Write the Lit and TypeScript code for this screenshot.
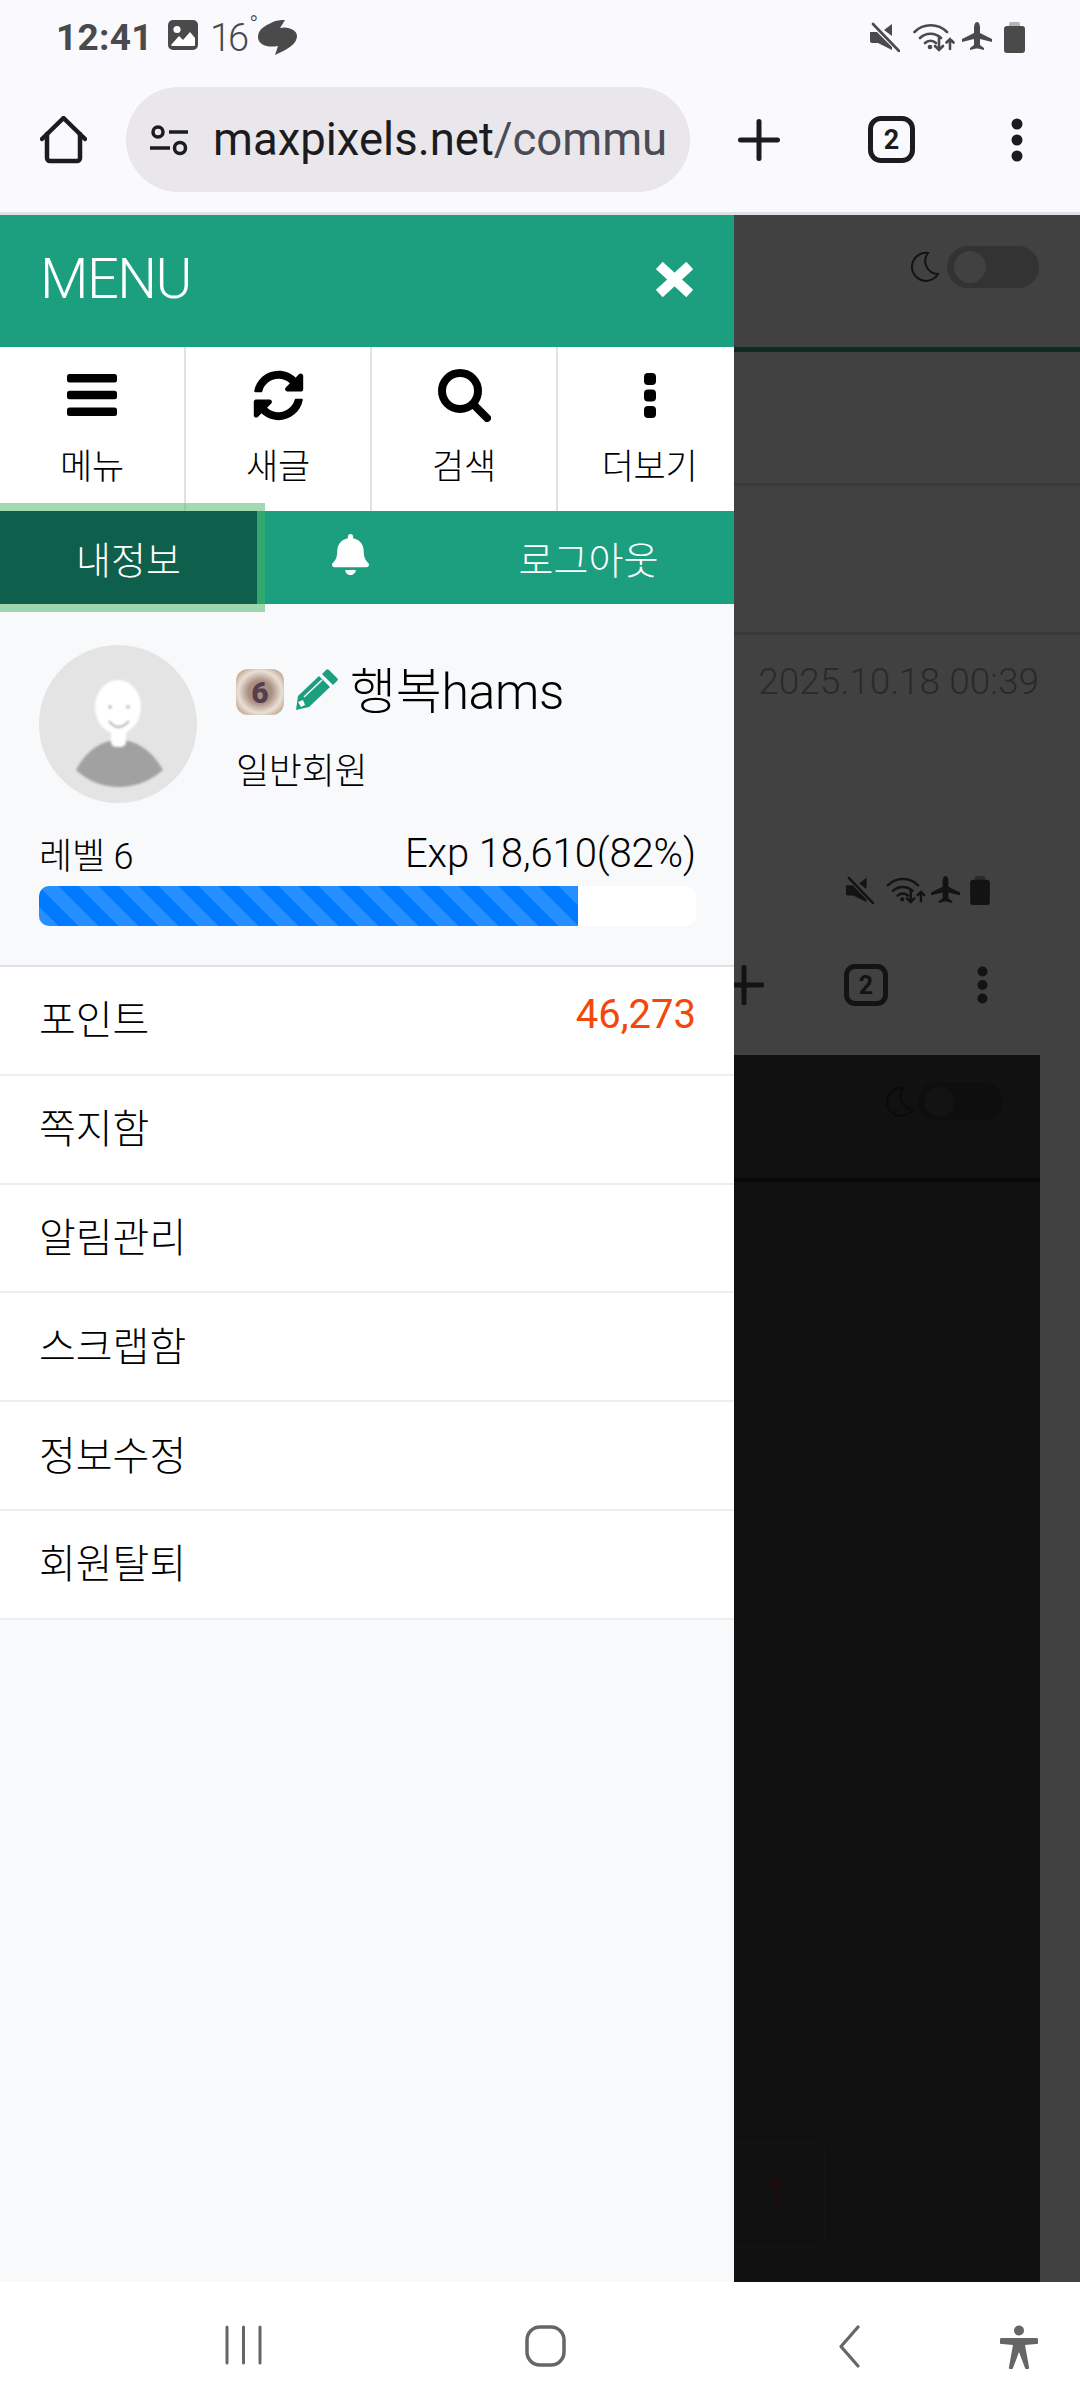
import { LitElement, html, css, svg } from "lit";
import { customElement } from "lit/decorators.js";

const moon = svg`<path d="M20 2 A14 14 0 1 0 30 23 A13 13 0 0 1 20 2Z" fill="none" stroke="currentColor" stroke-width="2"/>`;
const muteP = svg`<path d="M22 2V14L14 8Z M0 10H7L22 25V28L8 21H2a2 2 0 0 1-2-2Z" fill="currentColor"/><path d="M3 2L29 29" stroke="currentColor" stroke-width="2.6" stroke-linecap="round"/>`;
const wifiP = svg`<g fill="none" stroke="currentColor" stroke-width="2.6" stroke-linecap="round"><path d="M1.5 10A23 23 0 0 1 34 10"/><path d="M7 16A15 15 0 0 1 28 16"/><path d="M12 21A8 8 0 0 1 23 21"/><path d="M26 16V28M22 24L26 28L30 24"/><path d="M37 27V17M33.500 20.500L37 17L40.500 20.500"/></g><circle cx="17" cy="25" r="2.300" fill="currentColor"/>`;
const planeP = svg`<path d="M15 0c2 0 3 3 3 6v5l12 6v3l-12-3v6l4 3v2l-6-1.500h-2l-6 1.500v-2l4-3v-6l-12 3v-3l12-6v-5c0-3 1-6 3-6z" fill="currentColor"/>`;

@customElement("app-root")
export class AppRoot extends LitElement {
  static styles = css`
    :host {
      display: flex;
      flex-direction: column;
      width: 1080px;
      height: 2408px;
      overflow: hidden;
      font-family: Roboto, "Noto Sans CJK KR", sans-serif;
      color: #000;
      background: #fff;
    }
    svg { display: block; flex: none; }

    .chrome { height: 212px; background: #f9f9fe; border-bottom: 3px solid #dfe3e6; flex: none; }
    .status { height: 87px; display: flex; align-items: flex-start; padding: 20px 0 0 56px; box-sizing: border-box; color: #4a4a4a; }
    .time { font-size: 37px; line-height: 36px; font-weight: 700; width: 112px; letter-spacing: 0.3px; }
    .temp { display: flex; align-items: flex-start; font-size: 38px; font-weight: 300; line-height: 36px; margin: 0 0 0 12px; letter-spacing: -3px; width: 48px; }
    .deg { font-size: 24px; line-height: 24px; letter-spacing: 0; margin: -7px 0 0 3px; }
    .status-right { margin-left: auto; display: flex; padding-right: 55px; align-items: flex-start; padding-top: 2px; }
    .gap-13 { margin-left: 13px; }
    .gap-7 { margin-left: 7px; }
    .gap-12 { margin-left: 12px; }
    .toolbar { display: flex; align-items: center; height: 105px; padding-left: 40px; color: #1b1b20; }
    .pill { width: 564px; height: 105px; margin-left: 39px; border-radius: 53px; background: #e9e7ec; display: flex; align-items: center; padding: 0 20px 0 24px; box-sizing: border-box; }
    .url { font-size: 45.500px; white-space: nowrap; overflow: hidden; margin-left: 25px; flex: 1; line-height: 60px; }
    .url span { color: #4a4b55; }
    .tb-plus { margin-left: 48px; }
    .tb-tabs { margin-left: 88px; width: 47px; height: 47px; border: 5px solid #1b1b20; border-radius: 13px; box-sizing: border-box; display: flex; align-items: center; justify-content: center; font-size: 27px; font-weight: 700; }
    .tb-dots { margin-left: 96px; }

    .page { flex: 1; display: flex; min-height: 0; background: #414141; }
    .drawer { width: 734px; flex: none; background: #f8f9fa; display: flex; flex-direction: column; }
    .head { height: 132px; background: #1c9f7f; color: #fff; display: flex; align-items: center; justify-content: space-between; padding: 0 41px 4px 40px; box-sizing: border-box; }
    .head .t { font-size: 56px; font-weight: 300; letter-spacing: -1.500px; }
    .icons { height: 164px; background: #fff; display: grid; grid-template-columns: 186px 186px 186px 1fr; }
    .cell { display: flex; flex-direction: column; align-items: center; border-right: 2px solid #dee2e6; padding-top: 20px; box-sizing: border-box; }
    .cell:last-child { border-right: 0; padding-left: 7px; }
    .ic { height: 56px; display: flex; align-items: center; justify-content: center; }
    .lbl { font-size: 35px; line-height: 44px; margin-top: 23px; font-weight: 300; letter-spacing: -0.300px; }
    .tabs { height: 93px; background: #1c9f7f; color: #fff; display: grid; grid-template-columns: 257px 186px 291px; }
    .tab { display: flex; align-items: center; justify-content: center; font-size: 38px; font-weight: 300; }
    .tab.active { background: #0f5f4d; box-shadow: 0 0 0 8px rgba(72, 180, 97, 0.5); position: relative; }
    .bell { margin-top: -6px; }

    .profile { padding: 41px 38px 39px 39px; height: 361px; box-sizing: border-box; display: flex; flex-direction: column; }
    .who { display: flex; gap: 39px; }
    .avatar { width: 158px; height: 158px; border-radius: 50%; background: #e4e4e4; overflow: hidden; }
    .avatar svg { filter: blur(0.8px); }
    .info { padding-top: 22px; }
    .name { display: flex; align-items: center; height: 50px; }
    .badge { width: 48px; height: 46px; border-radius: 12px; background: radial-gradient(ellipse at center, #a98e82 0 34%, #eadfd4 64%, #a0846f 100%); display: flex; align-items: center; justify-content: center; color: #54404c; font-size: 30px; font-weight: 900; margin-right: 11px; }
    .pencil { margin-right: 12px; margin-top: -6px; }
    .nick { font-size: 50px; font-weight: 300; line-height: 60px; letter-spacing: -0.300px; }
    .role { font-size: 36px; font-weight: 300; line-height: 44px; margin-top: 33px; letter-spacing: -0.300px; }
    .levels { display: flex; justify-content: space-between; margin-top: 26px; height: 48px; align-items: center; }
    .lv { font-size: 36px; font-weight: 300; letter-spacing: -0.200px; }
    .exp { font-size: 40px; font-weight: 300; letter-spacing: -0.100px; }
    .bar { height: 40px; margin-top: 9px; border-radius: 10px; background: #fff; overflow: hidden; flex: none; }
    .fill { height: 100%; background-color: #007bff; background-image: linear-gradient(45deg, rgba(255,255,255,.15) 25%, transparent 25%, transparent 50%, rgba(255,255,255,.15) 50%, rgba(255,255,255,.15) 75%, transparent 75%, transparent); background-size: 40px 40px; }

    .list { border-top: 2px solid #dee2e6; background: #fff; flex: none; }
    .row { height: 108.800px; box-sizing: border-box; border-bottom: 2px solid #eeeeee; display: flex; align-items: center; justify-content: space-between; padding: 0 38px 6px 39px; font-size: 40px; font-weight: 300; }
    .pts { color: #f4470a; font-weight: 400; font-size: 40px; margin-top: -5px; }

    .ghost { flex: 1; min-width: 0; display: flex; flex-direction: column; color: #131313; }
    .g-head { height: 132px; display: flex; align-items: center; padding: 0 0 28px 174px; flex: none; box-sizing: border-box; }
    .g-line { height: 5px; background: #0f2a24; flex: none; }
    .g-block { height: 131px; border-bottom: 3px solid #3a3a3a; flex: none; }
    .g-block2 { height: 146px; border-bottom: 3px solid #3a3a3a; flex: none; }
    .g-date { height: 240px; flex: none; padding: 26px 41px 0 0; box-sizing: border-box; text-align: right; font-size: 37px; font-weight: 300; line-height: 42px; color: #2a2a2a; }
    .g-status { display: flex; height: 0; padding-left: 112px; flex: none; position: relative; top: 1px; }
    .g-stat-12 { margin-left: 12px; }
    .g-stat-5 { margin-left: 5px; }
    .g-stat-10 { margin-left: 10px; }
    .g-bar { display: flex; align-items: center; height: 180px; padding-top: 40px; flex: none; box-sizing: border-box; }
    .tog { width: 92px; height: 42px; border-radius: 21px; background: #333; margin-left: 7px; display: flex; align-items: center; padding-left: 7px; box-sizing: border-box; }
    .knob { width: 32px; height: 32px; border-radius: 50%; background: #414141; }
    .g-tabs { width: 44px; height: 42px; margin-left: 80px; border: 5px solid #131313; border-radius: 11px; box-sizing: border-box; display: flex; align-items: center; justify-content: center; font-size: 25px; font-weight: 700; }
    .g-dots { margin-left: 89px; }
    .dark { flex: 1; width: 306px; background: #111; display: flex; flex-direction: column; min-height: 0; }
    .d-head { height: 123px; flex: none; display: flex; align-items: center; padding: 0 0 30px 149px; box-sizing: border-box; color: #0b0b0b; }
    .d-tog { width: 85px; height: 39px; border-radius: 20px; background: #0e0e0e; margin-left: 3px; padding-left: 6px; display: flex; align-items: center; box-sizing: border-box; }
    .d-knob { width: 30px; height: 30px; border-radius: 50%; background: #131313; }
    .d-line { height: 4px; flex: none; background: #060a09; }
    .d-box { margin-top: 960px; width: 91px; height: 105px; flex: none; border: 1px solid #151515; border-left: 0; border-radius: 0 6px 6px 0; box-sizing: border-box; display: flex; align-items: center; padding-left: 30px; font-size: 44px; font-weight: 300; color: #220d0d; }

    .nav { height: 126px; flex: none; background: #fff; display: grid; grid-template-columns: 300px 313px 162px 1fr; padding: 43px 0 0 225px; box-sizing: border-box; color: #666; }
  `;

  render() {
    const rows = ["포인트", "쪽지함", "알림관리", "스크랩함", "정보수정", "회원탈퇴"];
    return html`
      <div class="chrome">
        <div class="status">
          <div class="time">12:41</div>
          <svg width="30" height="30" viewBox="0 0 30 30"><rect width="30" height="30" rx="5" fill="#4a4a4a"/><circle cx="9" cy="9.500" r="3.600" fill="#fff"/><path d="M3 25L11 16L15 20L22 12L27 18V25a1 1 0 0 1-1 1H4z" fill="#fff"/></svg>
          <div class="temp"><span>16</span><span class="deg">°</span></div>
          <svg width="39" height="35" viewBox="0 0 39 35"><path d="M13 3C18 0 23 0 27 0L22 8C30 6 39 10 39 16C39 24 30 29 17 35L20 26C10 28 0 25 0 17C0 10 6 6 13 3Z" fill="#4a4a4a"/></svg>
          <div class="status-right">
            <svg width="30" height="30" viewBox="0 0 30 30">${muteP}</svg>
            <svg class="gap-13" width="42" height="30" viewBox="0 0 42 30">${wifiP}</svg>
            <svg class="gap-7" width="30" height="30" viewBox="0 0 30 30">${planeP}</svg>
            <svg class="gap-12" width="21" height="31" viewBox="0 0 21 31"><rect x="5" width="11" height="6" rx="2" fill="#b5b5b5"/><rect y="4" width="21" height="27" rx="3" fill="#4a4a4a"/></svg>
          </div>
        </div>
        <div class="toolbar">
          <svg width="47" height="48" viewBox="0 0 47 48" fill="none" stroke="#1b1b20" stroke-width="4.500" stroke-linecap="round" stroke-linejoin="round"><path d="M2 23L23.500 2L45 23"/><path d="M7 18V42a3 3 0 0 0 3 3H37a3 3 0 0 0 3-3V18"/></svg>
          <div class="pill">
            <svg width="38" height="34" viewBox="0 0 38 34" fill="none" stroke="#1b1b20" stroke-width="3.500"><circle cx="8" cy="9" r="5"/><path d="M19 9H38"/><path d="M0 25H20"/><circle cx="30" cy="25" r="5.500"/></svg>
            <div class="url">maxpixels.net<span>/community</span></div>
          </div>
          <svg class="tb-plus" width="42" height="42" viewBox="0 0 42 42" stroke="#1b1b20" stroke-width="5" stroke-linecap="round"><path d="M21 2.500V39.500M2.500 21H39.500"/></svg>
          <div class="tb-tabs">2</div>
          <svg class="tb-dots" width="12" height="44" viewBox="0 0 12 44" fill="#1b1b20"><circle cx="6" cy="6" r="5.500"/><circle cx="6" cy="22" r="5.500"/><circle cx="6" cy="38" r="5.500"/></svg>
        </div>
      </div>

      <div class="page">
        <div class="drawer">
          <div class="head">
            <div class="t">MENU</div>
            <svg width="37" height="35" viewBox="0 0 37 35" stroke="#fff" stroke-width="11" stroke-linecap="round" stroke-linejoin="round"><path d="M6 6L31 29M31 6L6 29" stroke-linecap="square" transform="translate(18.500 17.500) scale(.92) translate(-18.500 -17.500)"/></svg>
          </div>
          <div class="icons">
            <div class="cell">
              <div class="ic"><svg width="50" height="42" viewBox="0 0 50 42" fill="#000"><rect width="50" height="8.500" rx="2.500"/><rect y="16.700" width="50" height="8.500" rx="2.500"/><rect y="33.500" width="50" height="8.500" rx="2.500"/></svg></div>
              <div class="lbl">메뉴</div>
            </div>
            <div class="cell">
              <div class="ic"><svg width="51" height="51" viewBox="0 0 512 512" fill="#000"><path d="M370.720 133.280C339.458 104.008 298.888 87.962 255.848 88c-77.458.068-144.328 53.178-162.791 126.850-1.344 5.363-6.122 9.150-11.651 9.150H24.103c-7.498 0-13.194-6.807-11.807-14.176C33.933 94.924 134.813 8 256 8c66.448 0 126.791 26.136 171.315 68.685L463.030 40.970C478.149 25.851 504 36.559 504 57.941V192c0 13.255-10.745 24-24 24H345.941c-21.382 0-32.090-25.851-16.971-40.971l41.750-41.749zM32 296h134.059c21.382 0 32.090 25.851 16.971 40.971l-41.750 41.750c31.262 29.273 71.835 45.319 114.876 45.280 77.418-.070 144.315-53.144 162.787-126.849 1.344-5.363 6.122-9.150 11.651-9.150h57.304c7.498 0 13.194 6.807 11.807 14.176C478.067 417.076 377.187 504 256 504c-66.448 0-126.791-26.136-171.315-68.685L48.970 471.030C33.851 486.149 8 475.441 8 454.059V320c0-13.255 10.745-24 24-24z"/></svg></div>
              <div class="lbl">새글</div>
            </div>
            <div class="cell">
              <div class="ic"><svg width="53" height="53" viewBox="0 0 53 53" fill="none" stroke="#000"><circle cx="22" cy="22" r="18" stroke-width="8"/><path d="M35 35L49 49" stroke-width="8" stroke-linecap="round"/></svg></div>
              <div class="lbl">검색</div>
            </div>
            <div class="cell">
              <div class="ic"><svg width="12" height="45" viewBox="0 0 12 45" fill="#000"><rect width="12" height="12" rx="4"/><rect y="16.500" width="12" height="12" rx="4"/><rect y="33" width="12" height="12" rx="4"/></svg></div>
              <div class="lbl">더보기</div>
            </div>
          </div>
          <div class="tabs">
            <div class="tab active">내정보</div>
            <div class="tab"><svg class="bell" width="37" height="41" viewBox="0 0 448 512" fill="#fff" preserveAspectRatio="none"><path d="M224 512c35.320 0 63.970-28.650 63.970-64H160.030c0 35.350 28.650 64 63.970 64zm215.390-149.710c-19.320-20.760-55.470-51.990-55.470-154.290 0-77.700-54.480-139.900-127.940-155.160V32c0-17.670-14.320-32-31.980-32s-31.980 14.330-31.980 32v20.840C118.560 68.100 64.080 130.300 64.080 208c0 102.300-36.150 133.530-55.470 154.290-6 6.450-8.660 14.160-8.610 21.710.110 16.400 12.980 32 32.100 32h383.800c19.120 0 32-15.600 32.100-32 .050-7.550-2.610-15.270-8.610-21.710z"/></svg></div>
            <div class="tab">로그아웃</div>
          </div>
          <div class="profile">
            <div class="who">
              <div class="avatar">
                <svg width="158" height="158" viewBox="0 0 158 158">
                  <path d="M37 125C48 104 64 95 80 95C96 95 112 104 124 125C110 137 95 142 80 142C65 142 50 137 37 125Z" fill="#a1a1a1"/>
                  <ellipse cx="79" cy="62" rx="23" ry="27" fill="#fff"/>
                  <rect x="72" y="82" width="15" height="20" rx="5" fill="#fff"/>
                  <circle cx="71" cy="62" r="1.800" fill="#b5b5b5"/>
                  <circle cx="89" cy="62" r="1.800" fill="#b5b5b5"/>
                  <path d="M70 76Q79 88 90 76" fill="none" stroke="#aaa" stroke-width="1.800"/>
                </svg>
              </div>
              <div class="info">
                <div class="name">
                  <div class="badge">6</div>
                  <svg class="pencil" width="43" height="41" viewBox="0 0 43 41" fill="#1c9f7f"><path d="M31 1a2 2 0 0 1 3 0L42 9a2 2 0 0 1 0 3L38 16L27 5Z"/><path d="M24 7L35 18L14 38L1 41L3 27Z"/><path d="M9 28L27 11" stroke="#f8f9fa" stroke-width="1.500"/><path d="M3 33L8 31L10 36L6 38Z" fill="#f8f9fa"/></svg>
                  <div class="nick">행복hams</div>
                </div>
                <div class="role">일반회원</div>
              </div>
            </div>
            <div class="levels">
              <div class="lv">레벨 6</div>
              <div class="exp">Exp 18,610(82%)</div>
            </div>
            <div class="bar"><div class="fill" style="width:82%"></div></div>
          </div>
          <div class="list">
            ${rows.map(
              (r, i) => html`<div class="row"><span>${r}</span>${i === 0 ? html`<span class="pts">46,273</span>` : ""}</div>`
            )}
          </div>
        </div>

        <div class="ghost">
          <div class="g-head">
            <svg width="32" height="32" viewBox="0 0 32 32">${moon}</svg>
            <div class="tog"><div class="knob"></div></div>
          </div>
          <div class="g-line"></div>
          <div class="g-block"></div>
          <div class="g-block2"></div>
          <div class="g-date">2025.10.18 00:39</div>
          <div class="g-status">
            <svg width="28" height="28" viewBox="0 0 30 30">${muteP}</svg>
            <svg class="g-stat-12" width="40" height="28" viewBox="0 0 42 30">${wifiP}</svg>
            <svg class="g-stat-5" width="29" height="29" viewBox="0 0 30 30">${planeP}</svg>
            <svg class="g-stat-10" width="20" height="29" viewBox="0 0 21 31"><rect x="5" width="11" height="6" rx="2" fill="#2a2a2a"/><rect y="4" width="21" height="27" rx="3" fill="currentColor"/></svg>
          </div>
          <div class="g-bar">
            <svg width="30" height="40" viewBox="0 0 30 40" stroke="#131313" stroke-width="5" stroke-linecap="round"><path d="M-10 20H28M10 2V38"/></svg>
            <div class="g-tabs">2</div>
            <svg class="g-dots" width="11" height="38" viewBox="0 0 11 38" fill="#131313"><circle cx="5.500" cy="5.500" r="5"/><circle cx="5.500" cy="19" r="5"/><circle cx="5.500" cy="32.500" r="5"/></svg>
          </div>
          <div class="dark">
            <div class="d-head">
              <svg width="32" height="32" viewBox="0 0 32 32">${moon}</svg>
              <div class="d-tog"><div class="d-knob"></div></div>
            </div>
            <div class="d-line"></div>
            <div class="d-box">1</div>
          </div>
        </div>
      </div>

      <div class="nav">
        <svg width="37" height="40" viewBox="0 0 37 40" stroke="#666" stroke-width="3" stroke-linecap="round"><path d="M2 2V38M18.500 2V38M35 2V38"/></svg>
        <svg width="41" height="42" viewBox="0 0 41 42" fill="none" stroke="#666" stroke-width="3.500"><rect x="2" y="2" width="37" height="38" rx="13"/></svg>
        <svg width="23" height="43" viewBox="0 0 23 43" fill="none" stroke="#666" stroke-width="3.200" stroke-linecap="round" stroke-linejoin="round"><path d="M20 2L3 21.500L20 41"/></svg>
        <svg width="38" height="44" viewBox="0 0 38 44" fill="#666"><circle cx="19" cy="5.500" r="5"/><path d="M2 13H36a2 2 0 0 1 0 6L25 20L29 42a2 2 0 0 1-4 1L19 27L13 43a2 2 0 0 1-4-1L13 20L2 19a2 2 0 0 1 0-6Z"/></svg>
      </div>
    `;
  }
}
